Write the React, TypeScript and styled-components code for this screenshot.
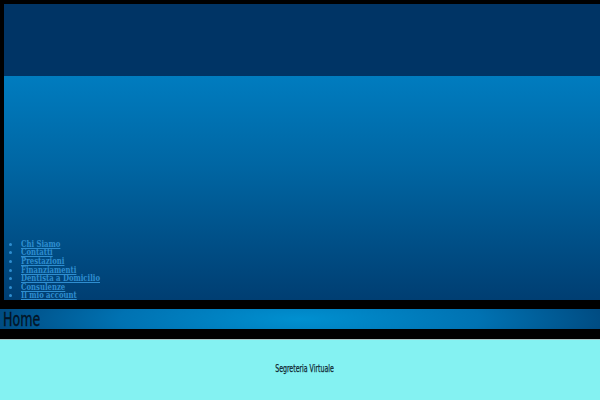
import React from 'react';
import styled, { createGlobalStyle } from 'styled-components';

const GlobalStyle = createGlobalStyle`
  html, body {
    margin: 0;
    padding: 0;
    background: #000;
    overflow: hidden;
  }
`;

const Page = styled.div`
  display: flex;
  flex-direction: column;
  width: 600px;
  height: 400px;
`;

const Header = styled.header`
  display: flex;
  flex-direction: column;
  margin: 4px 0 0 4px;
`;

const TopBand = styled.div`
  height: 72px;
  background: #003465;
`;

const NavBand = styled.nav`
  height: 224px;
  display: flex;
  flex-direction: column;
  justify-content: flex-end;
  background: linear-gradient(to bottom, #007cbf 0%, #0066a3 40%, #003e72 100%);
`;

const Menu = styled.ul`
  margin: 0;
  padding: 0 0 0 17px;
  font-family: 'DejaVu Serif Condensed', 'DejaVu Serif', serif;
  font-weight: bold;
  font-size: 8.5px;
  line-height: 8.6px;
  color: #2f8ed0;
`;

const MenuItem = styled.li`
  list-style: disc;
`;

const MenuLink = styled.a`
  display: inline-block;
  color: #2f8ed0;
  text-decoration: underline;
  transform: scaleX(0.9);
  transform-origin: left center;
`;

const Breadcrumb = styled.div`
  margin-top: 9px;
  height: 20px;
  display: flex;
  align-items: center;
  padding-left: 3px;
  background: radial-gradient(ellipse 60% 300% at 50% 50%, #0090d0 0%, #0072b2 50%, #003a6c 100%);
  font-family: 'DejaVu Sans', sans-serif;
  font-stretch: condensed;
  font-size: 19px;
  color: #031426;
`;

const HomeText = styled.span`
  display: inline-block;
  transform: scaleX(0.74);
  transform-origin: left center;
  -webkit-text-stroke: 0.3px #031426;
`;

const Footer = styled.footer`
  margin-top: 10px;
  flex: 1;
  display: flex;
  justify-content: center;
  padding-top: 22px;
  background: #84f2f2;
  border-top: 1px solid #a8c8c8;
`;

const FooterText = styled.span`
  display: inline-block;
  margin-left: 8px;
  font-family: 'DejaVu Sans', sans-serif;
  font-stretch: condensed;
  font-size: 11px;
  color: #0e2530;
  -webkit-text-stroke: 0.25px #0e2530;
  transform: scaleX(0.63);
`;

export default function App() {
  const items = [
    'Chi Siamo',
    'Contatti',
    'Prestazioni',
    'Finanziamenti',
    'Dentista a Domicilio',
    'Consulenze',
    'Il mio account',
  ];
  return (
    <>
      <GlobalStyle />
      <Page>
        <Header>
          <TopBand />
          <NavBand>
            <Menu>
              {items.map((item) => (
                <MenuItem key={item}>
                  <MenuLink href="#">{item}</MenuLink>
                </MenuItem>
              ))}
            </Menu>
          </NavBand>
        </Header>
        <Breadcrumb>
          <HomeText>Home</HomeText>
        </Breadcrumb>
        <Footer>
          <FooterText>Segreteria Virtuale</FooterText>
        </Footer>
      </Page>
    </>
  );
}
